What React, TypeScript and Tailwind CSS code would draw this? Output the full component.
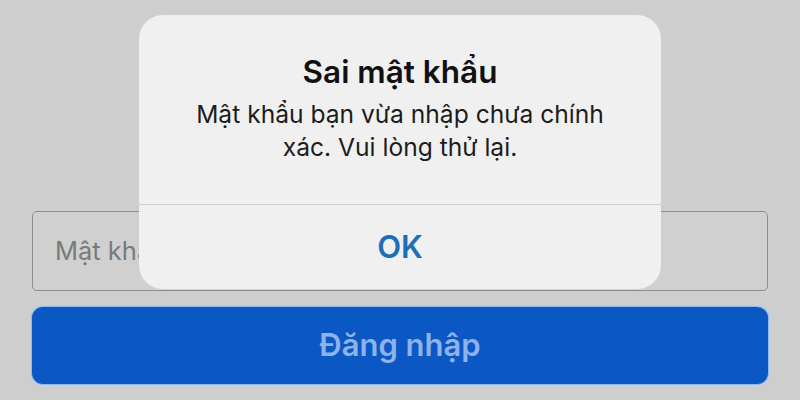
export default function App() {
  return (
    <div
      className="relative w-[800px] h-[400px] overflow-hidden bg-[#cecece]"
      style={{ fontFamily: 'Inter, "Noto Sans", sans-serif' }}
    >
      {/* Login form behind the alert */}
      <div className="flex flex-col gap-[16px] px-[32px] pt-[211px]">
        <div className="h-[80px] rounded-[5px] border-[1.5px] border-[#8d8d8d] bg-[#d0d0d0] flex items-center pl-[22px]">
          <span className="text-[25.5px] text-[#7a7a7a]">Mật khẩu</span>
        </div>
        <div className="h-[77px] rounded-[11px] bg-[#0b58c4] ring-1 ring-[#8cb7f2] flex items-center justify-center">
          <span className="text-[31px] font-semibold text-[#8db3ea]">Đăng nhập</span>
        </div>
      </div>

      {/* Alert dialog */}
      <div className="absolute left-[139px] top-[15px] w-[522px] h-[274px] rounded-[24px] bg-[#f0f0f1] flex flex-col">
        <div className="h-[189px] flex flex-col items-center pt-[38px] text-center">
          <div className="text-[31.5px] leading-[38px] font-semibold text-[#111]">Sai mật khẩu</div>
          <div className="mt-[7px] text-[24.6px] leading-[33px] text-[#1c1c1c]">
            Mật khẩu bạn vừa nhập chưa chính
            <br />
            xác. Vui lòng thử lại.
          </div>
        </div>
        <div className="h-px bg-[#cfcfd1]" />
        <div className="flex-1 flex items-center justify-center">
          <span className="text-[31px] font-semibold text-[#1c6fb8]">OK</span>
        </div>
      </div>
    </div>
  );
}
